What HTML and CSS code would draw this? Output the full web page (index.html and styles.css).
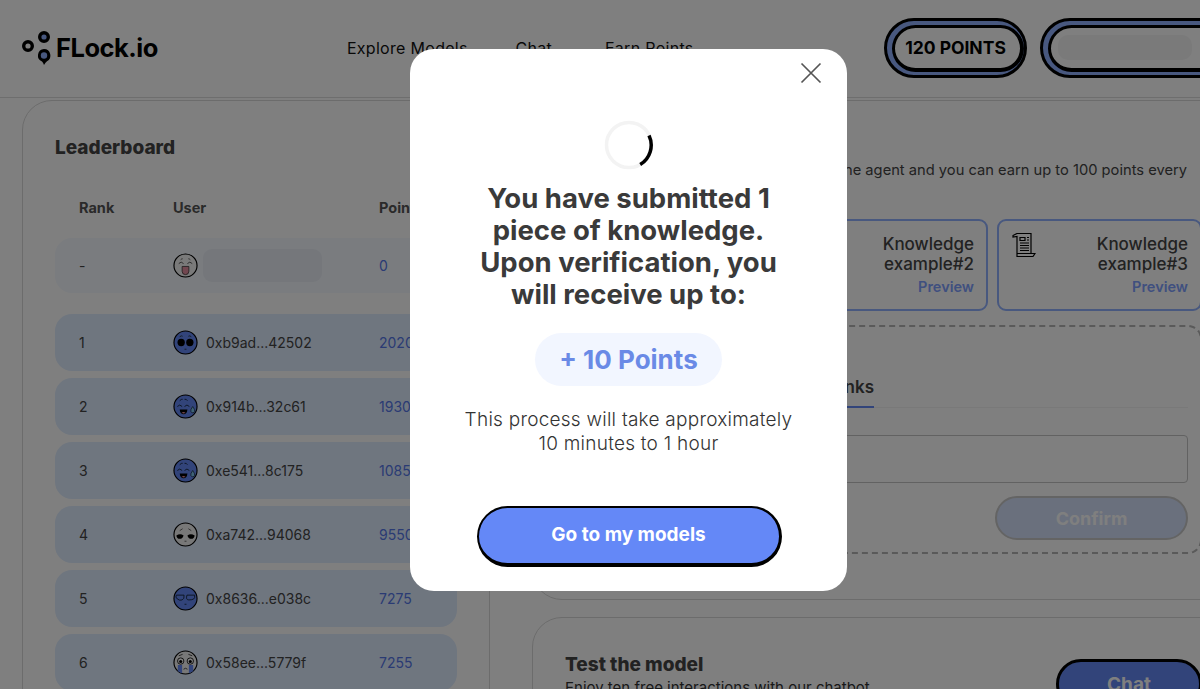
FILE: index.html

```html
<!DOCTYPE html>
<html lang="en">
<head>
    <meta charset="UTF-8">
    <meta name="viewport" content="width=device-width, initial-scale=1.0">
    <title>FLock.io</title>
    <link rel="stylesheet" href="styles.css">
</head>
<body>
    <svg class="sprites" width="0" height="0">
        <symbol id="face-tongue" viewBox="0 0 26 26">
            <circle cx="13" cy="13" r="12" fill="#f4f4f4" stroke="#000" stroke-width="1.2"/>
            <path d="M6 11q2.500-3 5 0M15 11q2.500-3 5 0M8 7q1-1 2-1M16 6q1 0 2 1" fill="none" stroke="#444" stroke-width=".9"/>
            <path d="M9.500 14h7v5q0 3.500-3.500 3.500t-3.500-3.500z" fill="#e58ea0" stroke="#333" stroke-width=".8"/>
        </symbol>
        <symbol id="face-eyes" viewBox="0 0 26 26">
            <circle cx="13" cy="13" r="12" fill="#6488f4" stroke="#000" stroke-width="1.2"/>
            <circle cx="8.500" cy="13" r="3.800" fill="#000"/>
            <circle cx="17.500" cy="13" r="3.800" fill="#000"/>
            <path d="M7 7q2-1.500 3-.5M16 6.500q1.500-1 3 .5M12 20h2" fill="none" stroke="#233" stroke-width=".9"/>
        </symbol>
        <symbol id="face-laugh" viewBox="0 0 26 26">
            <circle cx="13" cy="13" r="12" fill="#6488f4" stroke="#000" stroke-width="1.2"/>
            <path d="M4.500 13q2.500-3 5 0M12 13q2.500-3 5 0M7 7q2-2 3-1.500M12 5.500q2-.5 3 1.500" fill="none" stroke="#123" stroke-width=".9"/>
            <path d="M7 16h8q-.5 5-4 5t-4-5z" fill="#000"/>
            <path d="M9 19.500q2-1.500 4 0-2 1.500-4 0z" fill="#ee8fa0"/>
            <path d="M20.500 13q2.500 3.500 2 5t-2 1.500-2-1.500 2-5z" fill="#7fc6ee" stroke="#123" stroke-width=".7"/>
        </symbol>
        <symbol id="face-tired" viewBox="0 0 26 26">
            <circle cx="13" cy="13" r="12" fill="#f0f0f0" stroke="#000" stroke-width="1.2"/>
            <path d="M3.500 14q4-2.500 7.500 0-1 3.500-4 3.500t-3.500-3.500zM15 14q3.500-2.500 7.500 0-.5 3.500-3.500 3.500t-4-3.500z" fill="#000"/>
            <path d="M7 9l3-2M19 9l-3-2M12 20h2" fill="none" stroke="#555" stroke-width=".9"/>
        </symbol>
        <symbol id="face-glasses" viewBox="0 0 26 26">
            <circle cx="13" cy="13" r="12" fill="#6488f4" stroke="#000" stroke-width="1.2"/>
            <path d="M3.500 9.500h8q.5 4-2 5t-5-1-1-4zM14.500 9.500h8q.5 3-1 4t-5 1-2-5z" fill="none" stroke="#123" stroke-width=".9"/>
            <path d="M12 19h2" stroke="#123" stroke-width=".9"/>
        </symbol>
        <symbol id="face-cry" viewBox="0 0 26 26">
            <circle cx="13" cy="13" r="12" fill="#f0f0f0" stroke="#000" stroke-width="1.2"/>
            <path d="M5 15.500h4.500v9l-4.500-2.500zM16.500 15.500h4.500v6.500l-4.500 2.500z" fill="#6488f4"/>
            <circle cx="8" cy="11.500" r="3.300" fill="#fff" stroke="#222" stroke-width="1"/>
            <circle cx="18" cy="11.500" r="3.300" fill="#fff" stroke="#222" stroke-width="1"/>
            <circle cx="8" cy="12" r="1.600" fill="#000"/>
            <circle cx="18" cy="12" r="1.600" fill="#000"/>
            <path d="M6 6l4-1.500M20 6l-4-1.500M11 20q2-2 4 0" fill="none" stroke="#333" stroke-width=".9"/>
        </symbol>
        <symbol id="doc" viewBox="0 0 24 25">
            <path d="M1 2.500L5 .5h14v20h4l-2 3H5V3.500L1 4zM5 20.500h14M5 23.500v-3" fill="none" stroke="#000" stroke-width="1.200"/>
            <path d="M8 4.500h5v3H8zM15 4.500h2M15 7h2M8 10h9M8 12.500h9M8 15h9M8 17.500h9" fill="none" stroke="#000" stroke-width="1.200"/>
        </symbol>
    </svg>

    <div class="page">
        <header class="topbar">
            <a class="logo" href="#">
                <svg width="35" height="36" viewBox="0 0 35 36">
                    <circle cx="7" cy="16" r="4.300" fill="none" stroke="#000" stroke-width="3.400"/>
                    <circle cx="23" cy="7" r="4.300" fill="#90b0ff" stroke="#000" stroke-width="3.400"/>
                    <path d="M23 19a6.500 6.500 0 0 1 3 12.200q-1.500 1-3 3.800q-.7-2.500-2-3.500a6.500 6.500 0 0 1 2-12.500z" fill="#000"/>
                    <circle cx="23" cy="25.500" r="3.200" fill="#90b0ff"/>
                </svg>
                <span>FLock.io</span>
            </a>
            <nav class="nav">
                <a href="#">Explore Models</a>
                <a href="#">Chat</a>
                <a href="#">Earn Points</a>
            </nav>
            <div class="actions">
                <button class="pill-btn points-btn">120 POINTS</button>
                <button class="pill-btn wallet-btn"><span class="wallet-mask"></span></button>
            </div>
        </header>

        <main class="content">
            <section class="leaderboard">
                <h2>Leaderboard</h2>
                <div class="lb-head lb-grid">
                    <span>Rank</span>
                    <span>User</span>
                    <span>Points</span>
                </div>
                <div class="lb-row lb-grid me">
                    <span>-</span>
                    <span class="lb-user">
                        <svg class="avatar"><use href="#face-tongue"/></svg>
                        <span class="name-mask"></span>
                    </span>
                    <span class="lb-points">0</span>
                </div>
                <div class="lb-list">
                    <div class="lb-row lb-grid">
                        <span>1</span>
                        <span class="lb-user"><svg class="avatar"><use href="#face-eyes"/></svg>0xb9ad...42502</span>
                        <span class="lb-points">20200</span>
                    </div>
                    <div class="lb-row lb-grid">
                        <span>2</span>
                        <span class="lb-user"><svg class="avatar"><use href="#face-laugh"/></svg>0x914b...32c61</span>
                        <span class="lb-points">19300</span>
                    </div>
                    <div class="lb-row lb-grid">
                        <span>3</span>
                        <span class="lb-user"><svg class="avatar"><use href="#face-laugh"/></svg>0xe541...8c175</span>
                        <span class="lb-points">10850</span>
                    </div>
                    <div class="lb-row lb-grid">
                        <span>4</span>
                        <span class="lb-user"><svg class="avatar"><use href="#face-tired"/></svg>0xa742...94068</span>
                        <span class="lb-points">9550</span>
                    </div>
                    <div class="lb-row lb-grid">
                        <span>5</span>
                        <span class="lb-user"><svg class="avatar"><use href="#face-glasses"/></svg>0x8636...e038c</span>
                        <span class="lb-points">7275</span>
                    </div>
                    <div class="lb-row lb-grid">
                        <span>6</span>
                        <span class="lb-user"><svg class="avatar"><use href="#face-cry"/></svg>0x58ee...5779f</span>
                        <span class="lb-points">7255</span>
                    </div>
                </div>
            </section>

            <div class="side">
                <section class="card contribute">
                    <p class="intro">Contribute knowledge to the agent and you can earn up to 100 points every</p>
                    <div class="examples">
                        <div class="example">
                            <svg class="doc-icon"><use href="#doc"/></svg>
                            <div class="example-text">Knowledge<br>example#1<a href="#">Preview</a></div>
                        </div>
                        <div class="example">
                            <svg class="doc-icon"><use href="#doc"/></svg>
                            <div class="example-text">Knowledge<br>example#2<a href="#">Preview</a></div>
                        </div>
                        <div class="example">
                            <svg class="doc-icon"><use href="#doc"/></svg>
                            <div class="example-text">Knowledge<br>example#3<a href="#">Preview</a></div>
                        </div>
                    </div>
                    <div class="upload">
                        <div class="tabs">
                            <div class="tab-group"><span class="tab">Links</span></div>
                        </div>
                        <div class="url-input"></div>
                        <button class="confirm-btn">Confirm</button>
                    </div>
                </section>

                <section class="card test-model">
                    <div>
                        <h3>Test the model</h3>
                        <p>Enjoy ten free interactions with our chatbot</p>
                    </div>
                    <button class="chat-btn">Chat</button>
                </section>
            </div>
        </main>
    </div>

    <div class="overlay">
        <div class="modal">
            <button class="close-btn">
                <svg width="22" height="22" viewBox="0 0 22 22"><path d="M1.500 1.500l19 19M20.500 1.500l-19 19" stroke="#555" stroke-width="1.700" fill="none"/></svg>
            </button>
            <svg class="spinner" width="50" height="50" viewBox="0 0 50 50">
                <circle cx="25" cy="25" r="22.500" fill="none" stroke="#f3f3f3" stroke-width="3.500"/>
                <path d="M45 15.500A22.500 22.500 0 0 1 36.200 44.500" fill="none" stroke="#000" stroke-width="3.500"/>
            </svg>
            <h1>You have submitted 1 piece of knowledge. Upon verification, you will receive up to:</h1>
            <div class="reward">+ 10 Points</div>
            <p class="note">This process will take approximately<br>10 minutes to 1 hour</p>
            <button class="go-btn">Go to my models</button>
        </div>
    </div>
</body>
</html>
```

FILE: styles.css

```css
* {
    box-sizing: border-box;
}
html,
body {
    height: 100%;
}
body {
    margin: 0;
    overflow: hidden;
    background-color: #fff;
    color: #333;
    font-family: Inter, "Liberation Sans", sans-serif;
}
button {
    font-family: inherit;
}
a {
    color: inherit;
    text-decoration: none;
}
.sprites {
    position: absolute;
}
.page {
    width: 1240px;
}

/* top bar */
.topbar {
    display: flex;
    align-items: center;
    height: 98px;
    padding: 0 0 2px 21px;
    border-bottom: 1px solid #dcdcdc;
}
.logo {
    display: flex;
    align-items: center;
    color: #000;
    font-size: 25.500px;
    font-weight: 700;
    letter-spacing: -0.5px;
}
.nav {
    display: grid;
    grid-template-columns: 120px 41px auto;
    gap: 48.500px;
    margin-left: 189px;
    color: #111;
    font-size: 16px;
    letter-spacing: 0.3px;
    white-space: nowrap;
}
.actions {
    display: flex;
    gap: 13px;
    margin-left: auto;
}
.pill-btn {
    position: relative;
    isolation: isolate;
    height: 60px;
    border: 3px solid #000;
    border-radius: 30px;
    background-color: #90b0ff;
    color: #000;
    font-size: 17.500px;
    font-weight: 700;
}
.points-btn {
    width: 143px;
    padding: 0;
}
.wallet-btn {
    display: flex;
    align-items: center;
    width: 200px;
    padding-left: 15px;
}
.pill-btn::before {
    content: "";
    position: absolute;
    inset: 4px 0 3px 5px;
    z-index: -1;
    border: 3px solid #000;
    border-bottom-width: 4px;
    border-right-width: 4px;
    border-radius: 24px;
    background-color: #fff;
}
.wallet-mask {
    width: 134px;
    height: 25px;
    border-radius: 10px;
    background-color: #f4f4f4;
}

/* page columns */
.content {
    display: grid;
    grid-template-columns: 468px 1fr;
    gap: 42px;
    margin: 2px 5px 0 22px;
}
.leaderboard {
    height: 700px;
    padding: 36px 32px 0;
    border: 1px solid #d8d8d8;
    border-radius: 30px;
}
.leaderboard h2 {
    margin: 0;
    color: #444;
    font-size: 19px;
    line-height: 22px;
    font-weight: 800;
}
.lb-grid {
    display: grid;
    grid-template-columns: 94px 206px 1fr;
    padding-left: 24px;
    align-items: center;
}
.lb-head {
    height: 22px;
    margin-top: 37px;
    color: #555;
    font-size: 14.500px;
    font-weight: 700;
}
.lb-row {
    height: 57px;
    border-radius: 17px;
    background-color: #dfecff;
    color: #444;
    font-size: 14px;
}
.lb-row.me {
    height: 55px;
    margin-top: 20px;
    background-color: #f4f8ff;
}
.lb-list {
    display: flex;
    flex-direction: column;
    gap: 7px;
    margin-top: 21px;
}
.lb-user {
    display: flex;
    align-items: center;
    gap: 8px;
}
.avatar {
    flex: none;
    width: 25px;
    height: 25px;
}
.name-mask {
    width: 119px;
    height: 33px;
    margin-left: -3px;
    border-radius: 9px;
    background-color: #eaeff7;
}
.lb-points {
    color: #5577e8;
}

/* right column */
.card {
    border: 1px solid #d8d8d8;
    border-radius: 30px;
    padding: 0 32px;
}
.contribute {
    height: 500px;
    padding-top: 59px;
}
.intro {
    margin: 0;
    padding-right: 15px;
    color: #444;
    font-size: 14.700px;
    line-height: 20px;
    text-align: right;
    white-space: nowrap;
}
.examples {
    display: grid;
    grid-template-columns: 1fr 205px 205px;
    gap: 9px;
    margin-top: 39px;
}
.example {
    display: flex;
    justify-content: space-between;
    height: 92px;
    padding: 13px 12px 0 13px;
    border: 2px solid #90b0ff;
    border-radius: 9px;
}
.doc-icon {
    flex: none;
    width: 24px;
    height: 25px;
    margin-top: -1px;
}
.example-text {
    color: #444;
    font-size: 17px;
    font-weight: 500;
    line-height: 20px;
    text-align: right;
}
.example-text a {
    display: block;
    margin-top: 3px;
    color: #7fa0ff;
    font-size: 14.500px;
    font-weight: 600;
}
.upload {
    height: 229px;
    margin-top: 14px;
    padding: 0 12px 0 13px;
    border: 2px dashed #b4b4b4;
    border-radius: 14px;
}
.tabs {
    display: flex;
    height: 81px;
    border-bottom: 1px solid #f2f2f2;
}
.tab-group {
    display: flex;
    justify-content: flex-end;
    width: 294px;
}
.tab {
    height: 81px;
    padding-top: 50px;
    border-bottom: 2px solid #6488f4;
    color: #444;
    font-size: 17px;
    font-weight: 600;
}
.url-input {
    height: 48px;
    margin-top: 27px;
    border: 1px solid #c4c4c4;
    border-radius: 4px;
}
.confirm-btn {
    display: block;
    width: 193px;
    height: 44px;
    margin: 13px 0 0 auto;
    border: 2px solid #c8c8c8;
    border-radius: 22px;
    background-color: #d4e0fa;
    color: #fff;
    font-size: 18px;
    font-weight: 700;
}
.test-model {
    display: flex;
    justify-content: space-between;
    height: 200px;
    margin-top: 17px;
    padding-top: 36px;
}
.test-model h3 {
    margin: 0;
    color: #444;
    font-size: 19px;
    line-height: 22px;
    font-weight: 800;
}
.test-model p {
    margin: 2px 0 0;
    color: #333;
    font-size: 15px;
}
.chat-btn {
    width: 146px;
    height: 50px;
    margin-top: 5px;
    border: 3px solid #000;
    border-radius: 25px;
    background-color: #6488f4;
    color: #fff;
    font-size: 19px;
    font-weight: 700;
}

/* modal */
.overlay {
    position: fixed;
    inset: 0;
    padding: 49px 0 0 410px;
    background-color: rgba(0, 0, 0, 0.5);
}
.modal {
    position: relative;
    display: flex;
    flex-direction: column;
    align-items: center;
    width: 437px;
    height: 542px;
    padding-top: 71px;
    border-radius: 24px;
    background-color: #fff;
}
.close-btn {
    position: absolute;
    top: 13px;
    right: 25px;
    padding: 0;
    border: none;
    background: none;
    line-height: 0;
}
.modal h1 {
    width: 320px;
    margin: 12px 0 0;
    color: #3a3a3a;
    font-size: 27.500px;
    line-height: 32px;
    font-weight: 700;
    text-align: center;
}
.reward {
    display: flex;
    align-items: center;
    justify-content: center;
    width: 187px;
    height: 53px;
    margin-top: 23px;
    border-radius: 27px;
    background-color: #f2f6ff;
    color: #6a8ae6;
    font-size: 26px;
    font-weight: 700;
}
.note {
    margin: 22px 0 0;
    color: #333;
    font-size: 19px;
    font-weight: 300;
    line-height: 24px;
    letter-spacing: 0.25px;
    text-align: center;
}
.go-btn {
    width: 305px;
    height: 61px;
    margin: 50px 0 0 1px;
    padding-bottom: 3px;
    border: 2px solid #000;
    border-right-width: 3px;
    border-bottom-width: 4px;
    border-radius: 31px;
    background-color: #6488f7;
    color: #fff;
    font-size: 19px;
    font-weight: 700;
}
```
